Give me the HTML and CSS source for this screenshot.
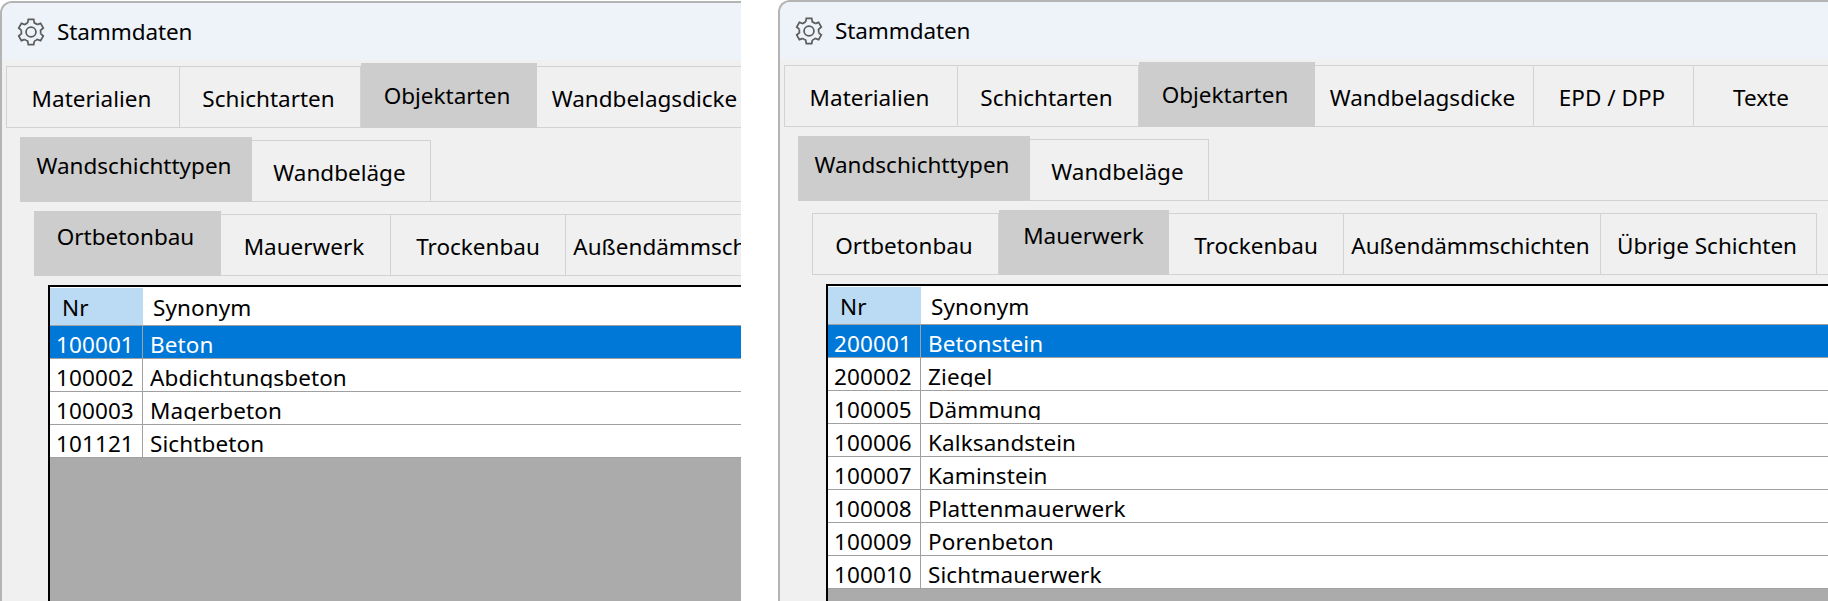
FILE: index.html
```html
<!DOCTYPE html>
<html lang="de">
<head>
<meta charset="utf-8">
<title>Stammdaten</title>
<link rel="stylesheet" href="styles.css">
</head>
<body>
<svg class="defs" width="0" height="0" aria-hidden="true">
  <defs>
    <g id="gear">
      <path id="tooth" d="M9.92 4.54L10.5 1.26H15.5L16.08 4.54A9 9 0 0 1 18.79 6.1"/>
      <use href="#tooth" transform="rotate(60 13 13)"/>
      <use href="#tooth" transform="rotate(120 13 13)"/>
      <use href="#tooth" transform="rotate(180 13 13)"/>
      <use href="#tooth" transform="rotate(240 13 13)"/>
      <use href="#tooth" transform="rotate(300 13 13)"/>
      <circle cx="13" cy="13" r="4.6"/>
    </g>
  </defs>
</svg>
<section class="window window-left">
  <header class="titlebar">
    <svg class="gear" viewBox="0 0 26 26"><use href="#gear"/></svg>
    <span class="title">Stammdaten</span>
  </header>
  <div class="content">
    <nav class="tabs level-1">
      <div class="tab w-mat">Materialien</div>
      <div class="tab w-sch">Schichtarten</div>
      <div class="tab w-obj active">Objektarten</div>
      <div class="tab w-dic">Wandbelagsdicke</div>
      <div class="tab w-epd">EPD / DPP</div>
      <div class="tab w-txt">Texte</div>
    </nav>
    <nav class="tabs level-2">
      <div class="tab w-wst active">Wandschichttypen</div>
      <div class="tab w-wbl">Wandbeläge</div>
    </nav>
    <nav class="tabs level-3">
      <div class="tab w-ort active">Ortbetonbau</div>
      <div class="tab w-mau">Mauerwerk</div>
      <div class="tab w-tro">Trockenbau</div>
      <div class="tab w-aus">Außendämmschichten</div>
      <div class="tab w-uebr">Übrige Schichten</div>
    </nav>
    <div class="grid">
      <div class="row head"><div class="c1">Nr</div><div class="c2">Synonym</div></div>
      <div class="row selected"><div class="c1"><span>100001</span></div><div class="c2"><span>Beton</span></div></div>
      <div class="row"><div class="c1"><span>100002</span></div><div class="c2"><span>Abdichtungsbeton</span></div></div>
      <div class="row"><div class="c1"><span>100003</span></div><div class="c2"><span>Magerbeton</span></div></div>
      <div class="row"><div class="c1"><span>101121</span></div><div class="c2"><span>Sichtbeton</span></div></div>
    </div>
  </div>
</section>
<section class="window window-right">
  <header class="titlebar">
    <svg class="gear" viewBox="0 0 26 26"><use href="#gear"/></svg>
    <span class="title">Stammdaten</span>
  </header>
  <div class="content">
    <nav class="tabs level-1">
      <div class="tab w-mat">Materialien</div>
      <div class="tab w-sch">Schichtarten</div>
      <div class="tab w-obj active">Objektarten</div>
      <div class="tab w-dic">Wandbelagsdicke</div>
      <div class="tab w-epd">EPD / DPP</div>
      <div class="tab w-txt">Texte</div>
    </nav>
    <nav class="tabs level-2">
      <div class="tab w-wst active">Wandschichttypen</div>
      <div class="tab w-wbl">Wandbeläge</div>
    </nav>
    <nav class="tabs level-3">
      <div class="tab w-ort">Ortbetonbau</div>
      <div class="tab w-mau active">Mauerwerk</div>
      <div class="tab w-tro">Trockenbau</div>
      <div class="tab w-aus">Außendämmschichten</div>
      <div class="tab w-uebr">Übrige Schichten</div>
    </nav>
    <div class="grid">
      <div class="row head"><div class="c1">Nr</div><div class="c2">Synonym</div></div>
      <div class="row selected"><div class="c1"><span>200001</span></div><div class="c2"><span>Betonstein</span></div></div>
      <div class="row"><div class="c1"><span>200002</span></div><div class="c2"><span>Ziegel</span></div></div>
      <div class="row"><div class="c1"><span>100005</span></div><div class="c2"><span>Dämmung</span></div></div>
      <div class="row"><div class="c1"><span>100006</span></div><div class="c2"><span>Kalksandstein</span></div></div>
      <div class="row"><div class="c1"><span>100007</span></div><div class="c2"><span>Kaminstein</span></div></div>
      <div class="row"><div class="c1"><span>100008</span></div><div class="c2"><span>Plattenmauerwerk</span></div></div>
      <div class="row"><div class="c1"><span>100009</span></div><div class="c2"><span>Porenbeton</span></div></div>
      <div class="row"><div class="c1"><span>100010</span></div><div class="c2"><span>Sichtmauerwerk</span></div></div>
    </div>
  </div>
</section>
</body>
</html>
```
FILE: styles.css
```css
* { box-sizing: border-box; }
html, body { margin: 0; height: 100%; }
body {
  display: flex;
  gap: 37px;
  background: #fff;
  overflow: hidden;
  color: #000;
  font-family: "Noto Sans", "Open Sans", sans-serif;
  font-size: 22.5px;
}
.defs { position: absolute; }
.window {
  display: flex;
  flex-direction: column;
  overflow: hidden;
  border-top: 2px solid #b4b4b4;
  border-left: 2px solid #b4b4b4;
  border-top-left-radius: 12px;
  background: #f0f0f0;
}
.window-left { width: 741px; height: 600px; margin-top: 1px; flex: none; }
.window-right { flex: 1; min-width: 0; height: 601px; }
.titlebar {
  flex: none;
  height: 57px;
  display: flex;
  align-items: center;
  gap: 12px;
  padding-left: 15px;
  background: #eef3fa;
}
.gear {
  width: 28px;
  height: 28px;
  fill: none;
  stroke: #5c5c5c;
  stroke-width: 1.6;
}
.title { letter-spacing: -0.1px; }
.content { flex: 1; min-height: 0; display: flex; flex-direction: column; padding-top: 3px; }
.tabs {
  flex: none;
  display: flex;
  align-items: flex-end;
  height: 65px;
  border-bottom: 1px solid #d2d2d2;
}
.level-1 { margin-left: 4px; }
.level-2 { margin-left: 18px; margin-top: 9px; }
.level-3 { margin-left: 32px; margin-top: 9px; }
.tab {
  flex: none;
  height: 61px;
  padding: 2px 3px 0 0;
  display: flex;
  align-items: center;
  justify-content: center;
  white-space: nowrap;
  border-top: 1px solid #d2d2d2;
  border-right: 1px solid #d2d2d2;
}
.tab:first-child { border-left: 1px solid #d2d2d2; }
.tab.active {
  height: 65px;
  margin-bottom: -1px;
  border: 0;
  background: #cdcdcd;
}
.level-1 .active { padding: 0 4px 0 0; }
.level-2 .active { padding: 0 4px 9px 0; }
.level-3 .active { padding: 0 4px 14px 0; }
.level-3 .w-mau.active { padding-right: 1px; }
.level-3 .w-tro { padding-right: 0; }
.w-mat { width: 174px; }
.w-sch { width: 181px; }
.w-obj { width: 176px; }
.w-dic { width: 219px; }
.w-epd { width: 160px; }
.w-txt { width: 138px; }
.w-wst { width: 232px; }
.w-wbl { width: 179px; }
.w-ort { width: 187px; }
.w-mau { width: 170px; }
.w-tro { width: 175px; }
.w-aus { width: 257px; }
.w-uebr { width: 216px; }
.grid {
  flex: 1;
  margin: 9px 0 0 46px;
  border-top: 2px solid #000;
  border-left: 2px solid #000;
  background: #ababab;
  min-height: 0;
}
.row {
  display: flex;
  height: 33px;
  background: #fff;
  border-bottom: 1px solid #a0a0a0;
  letter-spacing: 0.1px;
}
.row .c1 { flex: none; width: 93px; border-right: 1px solid #a0a0a0; padding-left: 6px; }
.row .c2 { flex: 1; padding-left: 7px; }
.row span {
  display: block;
  height: 29px;
  overflow: hidden;
  line-height: 28px;
  padding-top: 5px;
}
.row.head { height: 39px; padding-top: 1px; }
.head .c1 { background: #bbdaf3; border-right: 0; padding-left: 12px; line-height: 40px; }
.head .c2 { padding-left: 10px; line-height: 40px; }
.selected { background: #0078d7; color: #fff; }
```
